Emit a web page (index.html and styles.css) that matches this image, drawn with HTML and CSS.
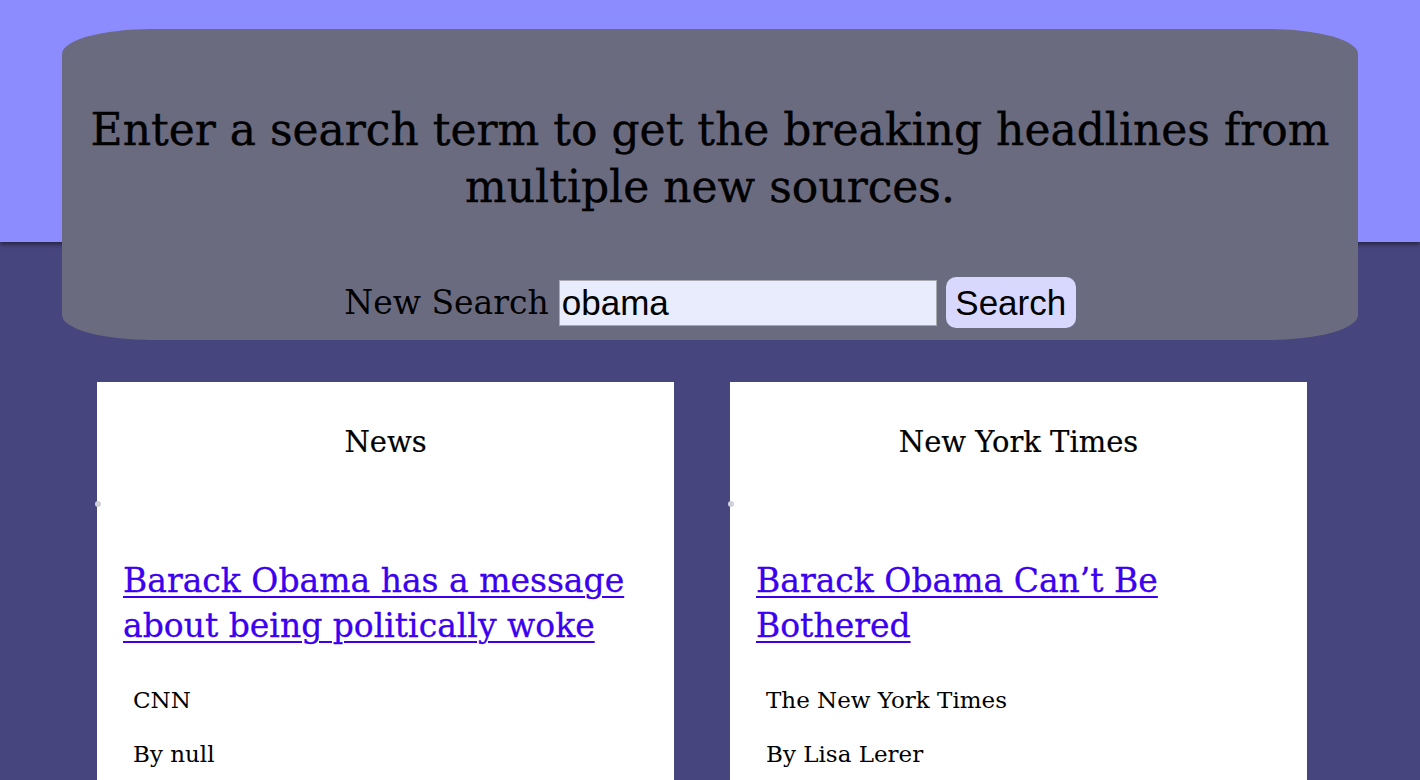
FILE: index.html
```html
<!DOCTYPE html>
<html>
<head>
<meta charset="utf-8">
<link rel="stylesheet" href="styles.css">
</head>
<body>
<header class="top">
  <div class="panel">
    <h1 class="title">Enter a search term to get the breaking headlines from multiple new sources.</h1>
    <form class="search">
      <label class="search-label">New Search</label>
      <input class="search-input" type="text" value="obama">
      <button class="search-btn" type="button">Search</button>
    </form>
  </div>
</header>
<main class="cards">
  <section class="card">
    <h2 class="card-title">News</h2>
    <span class="dot"></span>
    <a class="headline" href="#">Barack Obama has a message about being politically woke</a>
    <p class="meta">CNN</p>
    <p class="meta">By null</p>
  </section>
  <section class="card">
    <h2 class="card-title">New York Times</h2>
    <span class="dot"></span>
    <a class="headline" href="#">Barack Obama Can’t Be Bothered</a>
    <p class="meta">The New York Times</p>
    <p class="meta">By Lisa Lerer</p>
  </section>
</main>
</body>
</html>
```
FILE: styles.css
```css
html, body {
  margin: 0;
  padding: 0;
}
body {
  background: #47457e;
  font-family: "DejaVu Serif", "Liberation Serif", serif;
  color: #000;
  height: 780px;
  overflow: hidden;
}
.top {
  height: 242px;
  background: #8c8cff;
  box-shadow: 0 2px 5px rgba(0, 0, 0, 0.55);
  padding-top: 29px;
  box-sizing: border-box;
  position: relative;
  z-index: 1;
}
.panel {
  margin: 0 62px;
  height: 311px;
  background: #6b6b80;
  border-radius: 90px / 25px;
  text-align: center;
  padding-top: 72px;
  box-sizing: border-box;
}
.title {
  margin: 0 auto;
  font-size: 44px;
  font-weight: normal;
  line-height: 57px;
  width: 1270px;
  -webkit-text-stroke: 0.4px #000;
}
.search {
  margin-top: 62px;
  display: flex;
  justify-content: center;
  align-items: center;
}
.search-label {
  font-size: 33px;
  margin-right: 10px;
}
.search-input {
  width: 378px;
  height: 46px;
  box-sizing: border-box;
  background: #e8ecfd;
  border: 1px solid #a8a8b0;
  font-family: "Liberation Sans", Arial, sans-serif;
  font-size: 35px;
  padding: 0 2px;
  margin: 0 9px 0 0;
  outline: none;
}
.search-btn {
  height: 51px;
  width: 130px;
  background: #d8d8ff;
  border: none;
  border-radius: 10px;
  font-family: "Liberation Sans", Arial, sans-serif;
  font-size: 35px;
  color: #000;
  padding: 0;
}
.cards {
  display: grid;
  grid-template-columns: 577px 577px;
  column-gap: 56px;
  padding-left: 97px;
  margin-top: 140px;
}
.card {
  background: #fff;
  height: 500px;
  position: relative;
  padding: 0 26px;
}
.card-title {
  text-align: center;
  font-weight: normal;
  font-size: 29px;
  margin: 0;
  padding-top: 40px;
  line-height: 40px;
  -webkit-text-stroke: 0.2px #000;
}
.dot {
  position: absolute;
  left: -2px;
  top: 119px;
  width: 6px;
  height: 6px;
  border-radius: 50%;
  background: #d0d0d8;
}
.headline {
  display: block;
  margin-top: 96px;
  font-size: 33px;
  line-height: 45px;
  color: #3c00f0;
  text-decoration: underline;
  text-decoration-thickness: 2px;
  text-underline-offset: 4px;
  -webkit-text-stroke: 0.3px #3c00f0;
}
.meta {
  font-size: 23px;
  margin: 0;
  padding-left: 10px;
  line-height: 28px;
}
.headline + .meta {
  margin-top: 38px;
}
.meta + .meta {
  margin-top: 26px;
}
```
